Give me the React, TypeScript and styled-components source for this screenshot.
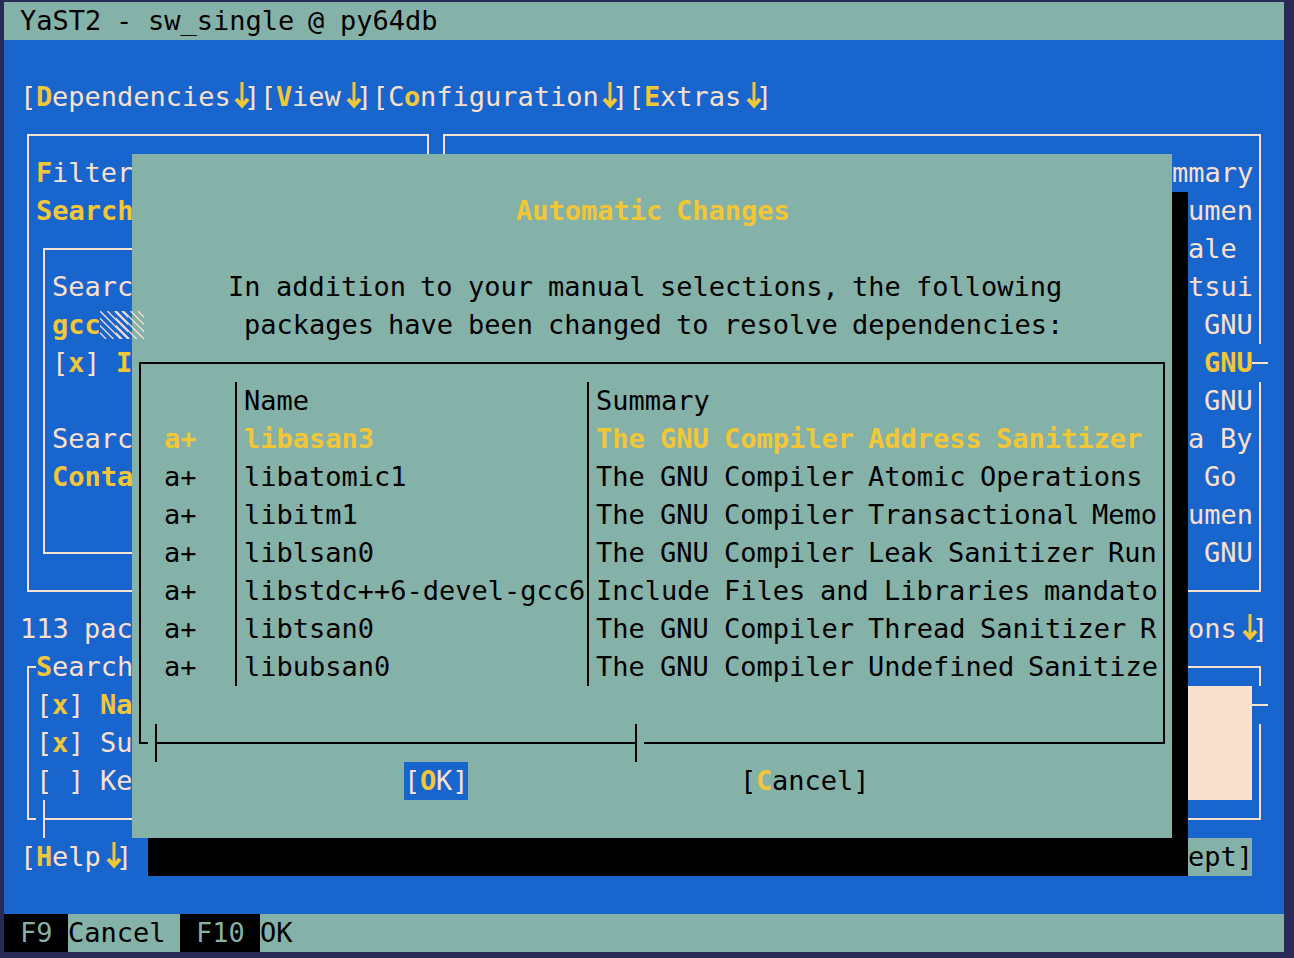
import React from 'react';
import styled, { createGlobalStyle, css } from 'styled-components';

const teal = '#84b1a8';
const blue = '#1965ce';
const cream = '#fae0cf';
const gold = '#f2c737';

const Global = createGlobalStyle`
  * { box-sizing: border-box; }
  body { margin: 0; background: #2a2a57; }
  body, button, input, select {
    font: 27px/38px "DejaVu Sans Mono", monospace;
  }
`;

const Desktop = styled.div`
  padding: 2px 10px 6px 4px;
`;

const Terminal = styled.main`
  position: relative;
  display: flex;
  flex-direction: column;
  background: ${blue};
  color: ${cream};
  overflow: hidden;
  white-space: pre;
`;

/* A word on the terminal's character grid: 16px for each character. */
const Word = styled.span<{ $cells: number; $hot?: boolean }>`
  display: inline-block;
  width: ${p => p.$cells * 16}px;
  height: 38px;
  vertical-align: top;
  text-align: left;
  ${p => p.$hot && css`font-weight: bold; color: ${gold};`}
`;

const Text = ({ children, hot }: { children: string; hot?: boolean }) => (
  <>
    {(children.match(/\S+| /g) ?? []).map((word, i) => (
      <Word key={i} $cells={word.length} $hot={hot}>{word}</Word>
    ))}
  </>
);

const TitleBar = styled.header`
  height: 38px;
  padding: 0 16px;
  background: ${teal};
  color: #000;
`;

const MenuBar = styled.nav`
  display: flex;
  height: 38px;
  margin: 38px 16px 0;
`;

const TextButton = styled.button<{ $tone?: 'focus' | 'dark' | 'accept' }>`
  height: 38px;
  padding: 0;
  border: 0;
  background: none;
  color: ${cream};
  white-space: pre;
  ${p => p.$tone === 'focus' && css`background: ${blue};`}
  ${p => p.$tone === 'dark' && css`color: #000;`}
  ${p => p.$tone === 'accept' && css`margin-right: 16px; background: ${teal}; color: #000;`}
`;

const ArrowSvg = styled.svg`
  width: 16px;
  height: 38px;
  vertical-align: top;
  overflow: visible;
  fill: none;
  stroke: ${gold};
`;

const Columns = styled.div`
  display: grid;
  grid-template-columns: 402px 1fr;
  gap: 14px;
  margin: 18px 23px;
`;

const Panel = styled.section`
  position: relative;
  border: 2px solid ${cream};
  padding: 18px 7px;
`;

const SearchPanel = styled(Panel)`
  margin: 18px 7px 0;
`;

const Line = styled.div`
  height: 38px;
`;

const PackageRow = styled(Line)`
  text-align: right;
`;

const Field = styled.label`
  display: block;
  height: 38px;
`;

const Choice = styled.select`
  display: block;
  width: 100%;
  height: 38px;
  padding: 0;
  border: 0;
  appearance: none;
  background: none;
  color: ${gold};
  font-weight: bold;
`;

const Query = styled.div`
  display: flex;
  align-items: center;
  height: 38px;
`;

const QueryInput = styled.input`
  width: 48px;
  height: 38px;
  padding: 0;
  border: 0;
  background: none;
  color: ${gold};
  font-weight: bold;
`;

const Hatch = styled.svg`
  position: relative;
  z-index: 2;
  flex: none;
  width: 44px;
  height: 28px;
  stroke: ${cream};
  stroke-width: 1.3;
`;

const StatusLine = styled.div`
  display: flex;
  justify-content: space-between;
  height: 38px;
  padding: 0 16px;
`;

const ScrollThumb = styled.i<{ $row: number }>`
  position: absolute;
  right: -9px;
  top: ${p => p.$row * 38 + 18}px;
  width: 16px;
  height: 38px;
  background: linear-gradient(${cream}, ${cream}) center / 100% 2px no-repeat ${blue};
`;

const ScrollEnd = styled.i<{ $side: 'start' | 'end'; $at: number; $ink: string; $paper: string }>`
  position: absolute;
  bottom: -20px;
  left: ${p => p.$at}px;
  width: 16px;
  height: 38px;
  background:
    linear-gradient(${p => p.$ink}, ${p => p.$ink}) 7px 0 / 2px 100% no-repeat,
    linear-gradient(${p => p.$ink}, ${p => p.$ink}) ${p => (p.$side === 'start' ? 'right' : 'left')} 18px / 8px 2px no-repeat
    ${p => p.$paper};
`;

const Legend = styled.h2`
  position: absolute;
  top: -20px;
  left: 7px;
  margin: 0;
  font: inherit;
  background: ${blue};
`;

const Details = styled.div`
  height: 114px;
  background: ${cream};
`;

const CheckLabel = styled.label`
  display: block;
  position: relative;
  height: 38px;
`;

const CheckInput = styled.input`
  position: absolute;
  width: 48px;
  height: 38px;
  margin: 0;
  opacity: 0;
`;

const Footer = styled.footer`
  display: flex;
  height: 38px;
  margin-top: 38px;
  background: ${teal};
  color: #000;
`;

const KeyCap = styled.kbd`
  font: inherit;
  padding: 0 16px;
  background: #000;
  color: ${teal};
`;

const KeyAction = styled.button`
  height: 38px;
  padding: 0 16px 0 0;
  border: 0;
  background: none;
  color: #000;
`;

const Dialog = styled.section`
  position: absolute;
  z-index: 1;
  top: 152px;
  left: 128px;
  right: 112px;
  padding: 38px 7px;
  background: ${teal};
  color: #000;
  box-shadow: 16px 38px 0 #000;
`;

const DialogTitle = styled.h1`
  margin: 0 0 38px;
  font-size: 27px;
  line-height: 38px;
  text-align: center;
`;

const Message = styled.p`
  margin: 0 0 18px;
  padding-left: 89px;
`;

const TableFrame = styled.div`
  position: relative;
  border: 2px solid #000;
  padding: 18px 0 56px;
`;

const Table = styled.table`
  width: 100%;
  table-layout: fixed;
  border-collapse: separate;
  border-spacing: 0;
  text-align: left;
`;

const Cell = styled.td`
  height: 38px;
  padding: 0 0 0 7px;
  font-weight: normal;
  border-left: 2px solid #000;
  &:first-child { border-left: 0; padding-left: 23px; }
  &:nth-child(1) { width: 94px; }
  &:nth-child(2) { width: 352px; }
`;

const Actions = styled.div`
  display: flex;
  justify-content: center;
  gap: 272px;
  margin-top: 18px;
  padding-right: 32px;
`;

const DownArrow = () => (
  <ArrowSvg viewBox="0 0 16 38" aria-hidden="true">
    <path d="M14 4v24" strokeWidth="3" />
    <path d="M8 21l6 6.5 6-6.5" strokeWidth="4" />
  </ArrowSvg>
);

const Menu = ({ pre = '', hot, rest }: { pre?: string; hot: string; rest: string }) => (
  <TextButton>
    <Text>{'[' + pre}</Text><Text hot>{hot}</Text><Text>{rest}</Text><DownArrow /><Text>]</Text>
  </TextButton>
);

const Check = ({ on, text, bold }: { on?: boolean; text: string; bold?: boolean }) => (
  <CheckLabel>
    <CheckInput type="checkbox" defaultChecked={on} />
    <Text>[</Text><Text hot>{on ? 'x' : ' '}</Text><Text>{'] '}</Text><Text hot={bold}>{text}</Text>
  </CheckLabel>
);

const hatchLines = [-21.9, -14.6, -7.3, 0, 7.3, 14.6, 21.9];

const HatchBlock = ({ x }: { x: number }) => (
  <svg x={x} width="28" height="28">
    {hatchLines.map(start => <path key={start} d={`M${start} 0l28 28`} />)}
  </svg>
);

const summaries = ['mmary', 'umen', 'ale ', 'tsui', 'GNU', 'GNU', 'GNU', 'a By', 'Go ', 'umen', 'GNU'];
const currentSummary = 5;

const packages = [
  ['libasan3', 'The GNU Compiler Address Sanitizer'],
  ['libatomic1', 'The GNU Compiler Atomic Operations'],
  ['libitm1', 'The GNU Compiler Transactional Memo'],
  ['liblsan0', 'The GNU Compiler Leak Sanitizer Run'],
  ['libstdc++6-devel-gcc6', 'Include Files and Libraries mandato'],
  ['libtsan0', 'The GNU Compiler Thread Sanitizer R'],
  ['libubsan0', 'The GNU Compiler Undefined Sanitize'],
];

export default function App() {
  return (
    <Desktop>
      <Global />
      <Terminal>
        <TitleBar><Text>YaST2 - sw_single @ py64db</Text></TitleBar>
        <MenuBar>
          <Menu hot="D" rest="ependencies" />
          <Menu hot="V" rest="iew" />
          <Menu pre="C" hot="o" rest="nfiguration" />
          <Menu hot="E" rest="xtras" />
        </MenuBar>

        <Columns>
          <Panel>
            <Field htmlFor="filter"><Text hot>F</Text><Text>ilter</Text></Field>
            <Choice id="filter"><option>Search</option></Choice>
            <SearchPanel>
              <Field htmlFor="query"><Text>Searc</Text></Field>
              <Query>
                <QueryInput id="query" defaultValue="gcc" />
                <Hatch viewBox="0 0 44 28" aria-hidden="true">
                  <HatchBlock x={0} />
                  <HatchBlock x={16} />
                </Hatch>
              </Query>
              <Check on bold text="I" />
              <Line />
              <Field htmlFor="mode"><Text>Searc</Text></Field>
              <Choice id="mode"><option>Conta</option></Choice>
              <Line />
            </SearchPanel>
          </Panel>
          <Panel>
            {summaries.map((summary, i) => (
              <PackageRow key={i}><Text hot={i === currentSummary}>{summary}</Text></PackageRow>
            ))}
            <ScrollThumb $row={currentSummary} />
          </Panel>
        </Columns>

        <StatusLine>
          <span><Text>113 pac</Text></span>
          <TextButton><Text>ons</Text><DownArrow /><Text>]</Text></TextButton>
        </StatusLine>

        <Columns>
          <Panel>
            <Legend><Text hot>S</Text><Text>earch</Text></Legend>
            <Check on bold text="Na" />
            <Check on text="Su" />
            <Check text="Ke" />
            <ScrollEnd $side="start" $at={7} $ink={cream} $paper={blue} />
          </Panel>
          <Panel>
            <Details />
            <ScrollThumb $row={0} />
          </Panel>
        </Columns>

        <StatusLine>
          <Menu hot="H" rest="elp" />
          <TextButton $tone="accept"><Text>ept]</Text></TextButton>
        </StatusLine>

        <Footer>
          <KeyCap><Text>F9</Text></KeyCap>
          <KeyAction><Text>Cancel</Text></KeyAction>
          <KeyCap><Text>F10</Text></KeyCap>
          <KeyAction><Text>OK</Text></KeyAction>
        </Footer>

        <Dialog role="dialog" aria-labelledby="dialog-title">
          <DialogTitle id="dialog-title"><Text hot>Automatic Changes</Text></DialogTitle>
          <Message>
            <Text>In addition to your manual selections, the following</Text>
            <br />
            <Text>{' packages have been changed to resolve dependencies:'}</Text>
          </Message>
          <TableFrame>
            <Table>
              <thead>
                <tr>
                  <Cell as="th" />
                  <Cell as="th"><Text>Name</Text></Cell>
                  <Cell as="th"><Text>Summary</Text></Cell>
                </tr>
              </thead>
              <tbody>
                {packages.map(([name, summary], i) => (
                  <tr key={name}>
                    <Cell><Text hot={i === 0}>a+</Text></Cell>
                    <Cell><Text hot={i === 0}>{name}</Text></Cell>
                    <Cell><Text hot={i === 0}>{summary}</Text></Cell>
                  </tr>
                ))}
              </tbody>
            </Table>
            <ScrollEnd $side="start" $at={7} $ink="#000" $paper={teal} />
            <ScrollEnd $side="end" $at={487} $ink="#000" $paper={teal} />
          </TableFrame>
          <Actions>
            <TextButton $tone="focus"><Text>[</Text><Text hot>O</Text><Text>K]</Text></TextButton>
            <TextButton $tone="dark"><Text>[</Text><Text hot>C</Text><Text>ancel]</Text></TextButton>
          </Actions>
        </Dialog>
      </Terminal>
    </Desktop>
  );
}
